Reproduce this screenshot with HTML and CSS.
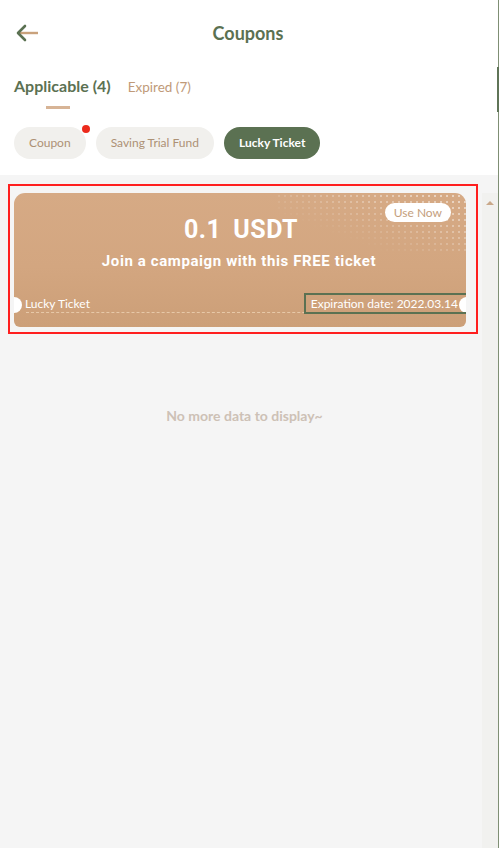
FILE: index.html
```html
<!DOCTYPE html>
<html lang="en">
<head>
<meta charset="utf-8">
<title>Coupons</title>
<link rel="stylesheet" href="styles.css">
</head>
<body>
<div class="frame">
  <div class="page">
    <header class="top">
      <div class="topbar">
        <svg class="back" width="24" height="18" viewBox="0 0 24 18" aria-hidden="true">
          <line x1="4" y1="9" x2="23" y2="9" stroke="#c9a27c" stroke-width="2.4"/>
          <polyline points="10,2 3,9 10,16" fill="none" stroke="#5b7152" stroke-width="2.6" stroke-linecap="round" stroke-linejoin="round"/>
        </svg>
        <h1 class="title">Coupons</h1>
      </div>
      <nav class="tabs">
        <div class="tab active">Applicable (4)<span class="bar"></span></div>
        <div class="tab">Expired (7)</div>
      </nav>
      <div class="chips">
        <span class="chip">Coupon<i class="dot"></i></span>
        <span class="chip">Saving Trial Fund</span>
        <span class="chip on">Lucky Ticket</span>
      </div>
    </header>
    <div class="body">
      <main class="list">
        <div class="item">
          <div class="ticket">
            <span class="use">Use Now</span>
            <div class="amount"><span>0.1</span><span>USDT</span></div>
            <div class="desc">Join a campaign with this FREE ticket</div>
            <div class="foot">
              <span class="kind">Lucky Ticket</span>
              <span class="exp">Expiration date: 2022.03.14</span>
            </div>
            <i class="dash"></i>
            <i class="notch left"></i>
            <i class="notch right"></i>
          </div>
        </div>
        <p class="empty">No more data to display~</p>
      </main>
      <aside class="scroll"><i class="up"></i></aside>
    </div>
  </div>
  <div class="edge"><i class="thumb"></i></div>
</div>
</body>
</html>
```
FILE: styles.css
```css
* { box-sizing: border-box; margin: 0; padding: 0; }
html, body { width: 500px; height: 848px; overflow: hidden; background: #fff; }
body { font-family: Lato, "Open Sans", sans-serif; }

.frame { display: flex; height: 848px; }
.page { width: 498px; display: flex; flex-direction: column; background: #f5f5f5; }
.edge { width: 2px; border-left: 1px solid #7f8f74; background: #fff; display: flex; flex-direction: column; }
.thumb { display: block; width: 2px; margin-left: -2px; margin-top: 67px; height: 45px; background: #5f7457; }

.top { background: #fff; padding-bottom: 16px; }
.topbar { height: 66px; display: flex; align-items: center; position: relative; padding-left: 15px; }
.back { display: block; }
.title { position: absolute; left: 0; right: 0; text-align: center; font-size: 18px; font-weight: 700; color: #5b7152; pointer-events: none; padding-right: 2px; }

.tabs { display: flex; align-items: baseline; gap: 17px; padding-left: 14px; margin-top: 10px; }
.tab { font-size: 13.5px; line-height: 20px; color: #c09a78; position: relative; }
.tab.active { font-size: 16px; font-weight: 700; color: #5b7152; padding-bottom: 13px; }
.bar { position: absolute; left: 32px; bottom: 0; width: 24px; height: 3px; background: #d7b496; }

.chips { display: flex; gap: 10px; padding-left: 14px; margin-top: 18px; }
.chip { position: relative; height: 32px; padding: 0 15px; border-radius: 16px; background: #f1f0ed; color: #ad9175; font-size: 12px; line-height: 32px; }
.chip.on { background: #5b7152; color: #fff; font-weight: 700; }
.dot { position: absolute; top: -2px; right: -4px; width: 8px; height: 8px; border-radius: 50%; background: #ec2a1c; }

.body { flex: 1; display: flex; }
.list { width: 482px; padding: 9px 0 0 8px; }
.item { width: 470px; border: 2px solid #ff1f1f; padding: 7px 10px 5px 4px; }
.ticket { position: relative; height: 134px; border-radius: 11px 11px 6px 6px; padding-top: 22px; color: #fff; overflow: hidden;
  background: linear-gradient(180deg, #d6aa85 0%, #d3a680 55%, #cc9f78 100%); }
.ticket::before { content: ""; position: absolute; right: 0; top: 0; width: 190px; height: 60px;
  background: radial-gradient(circle, rgba(255,255,255,.5) 0.7px, transparent 1.1px) 0 0 / 6px 6px;
  -webkit-mask-image: linear-gradient(200deg, #000 10%, transparent 70%); mask-image: linear-gradient(200deg, #000 10%, transparent 70%); }
.use { position: absolute; top: 10px; right: 15px; height: 19px; line-height: 19px; padding: 0 9px; border-radius: 10px; background: #fff; color: #c49e7c; font-size: 12px; z-index: 1; }
.amount { display: flex; justify-content: center; gap: 12px; font-family: Roboto, "DejaVu Sans", sans-serif; font-weight: 700; font-size: 25px; line-height: 30px; letter-spacing: 0.5px; padding-left: 2px; }
.desc { text-align: center; font-family: Roboto, "DejaVu Sans", sans-serif; font-weight: 700; font-size: 15px; line-height: 20px; margin-top: 6px; letter-spacing: 0.6px; padding-right: 2px; }
.foot { display: flex; justify-content: space-between; align-items: center; margin-top: 22px; padding-left: 11px; position: relative; z-index: 2; }
.kind { font-size: 12px; line-height: 17px; }
.exp { font-size: 12px; line-height: 17px; border: 2px solid #5b7152; padding: 0 8px 0 5px; margin-right: -2px; }
.dash { position: absolute; left: 12px; right: 10px; top: 119px; border-top: 1px dashed rgba(238,210,180,.8); }
.notch { position: absolute; top: 104px; width: 16px; height: 16px; border-radius: 50%; background: #fff; z-index: 1; }
.notch.left { left: -8px; }
.notch.right { right: -9px; }

.empty { text-align: center; margin-top: 73px; font-size: 14px; font-weight: 700; color: #cdc1b6; padding-right: 1px; }

.scroll { width: 16px; margin-top: 18px; background: #f1f1ef; display: flex; justify-content: center; padding-top: 8px; }
.up { width: 0; height: 0; border-left: 4px solid transparent; border-right: 4px solid transparent; border-bottom: 4px solid #c9a88a; }
```
